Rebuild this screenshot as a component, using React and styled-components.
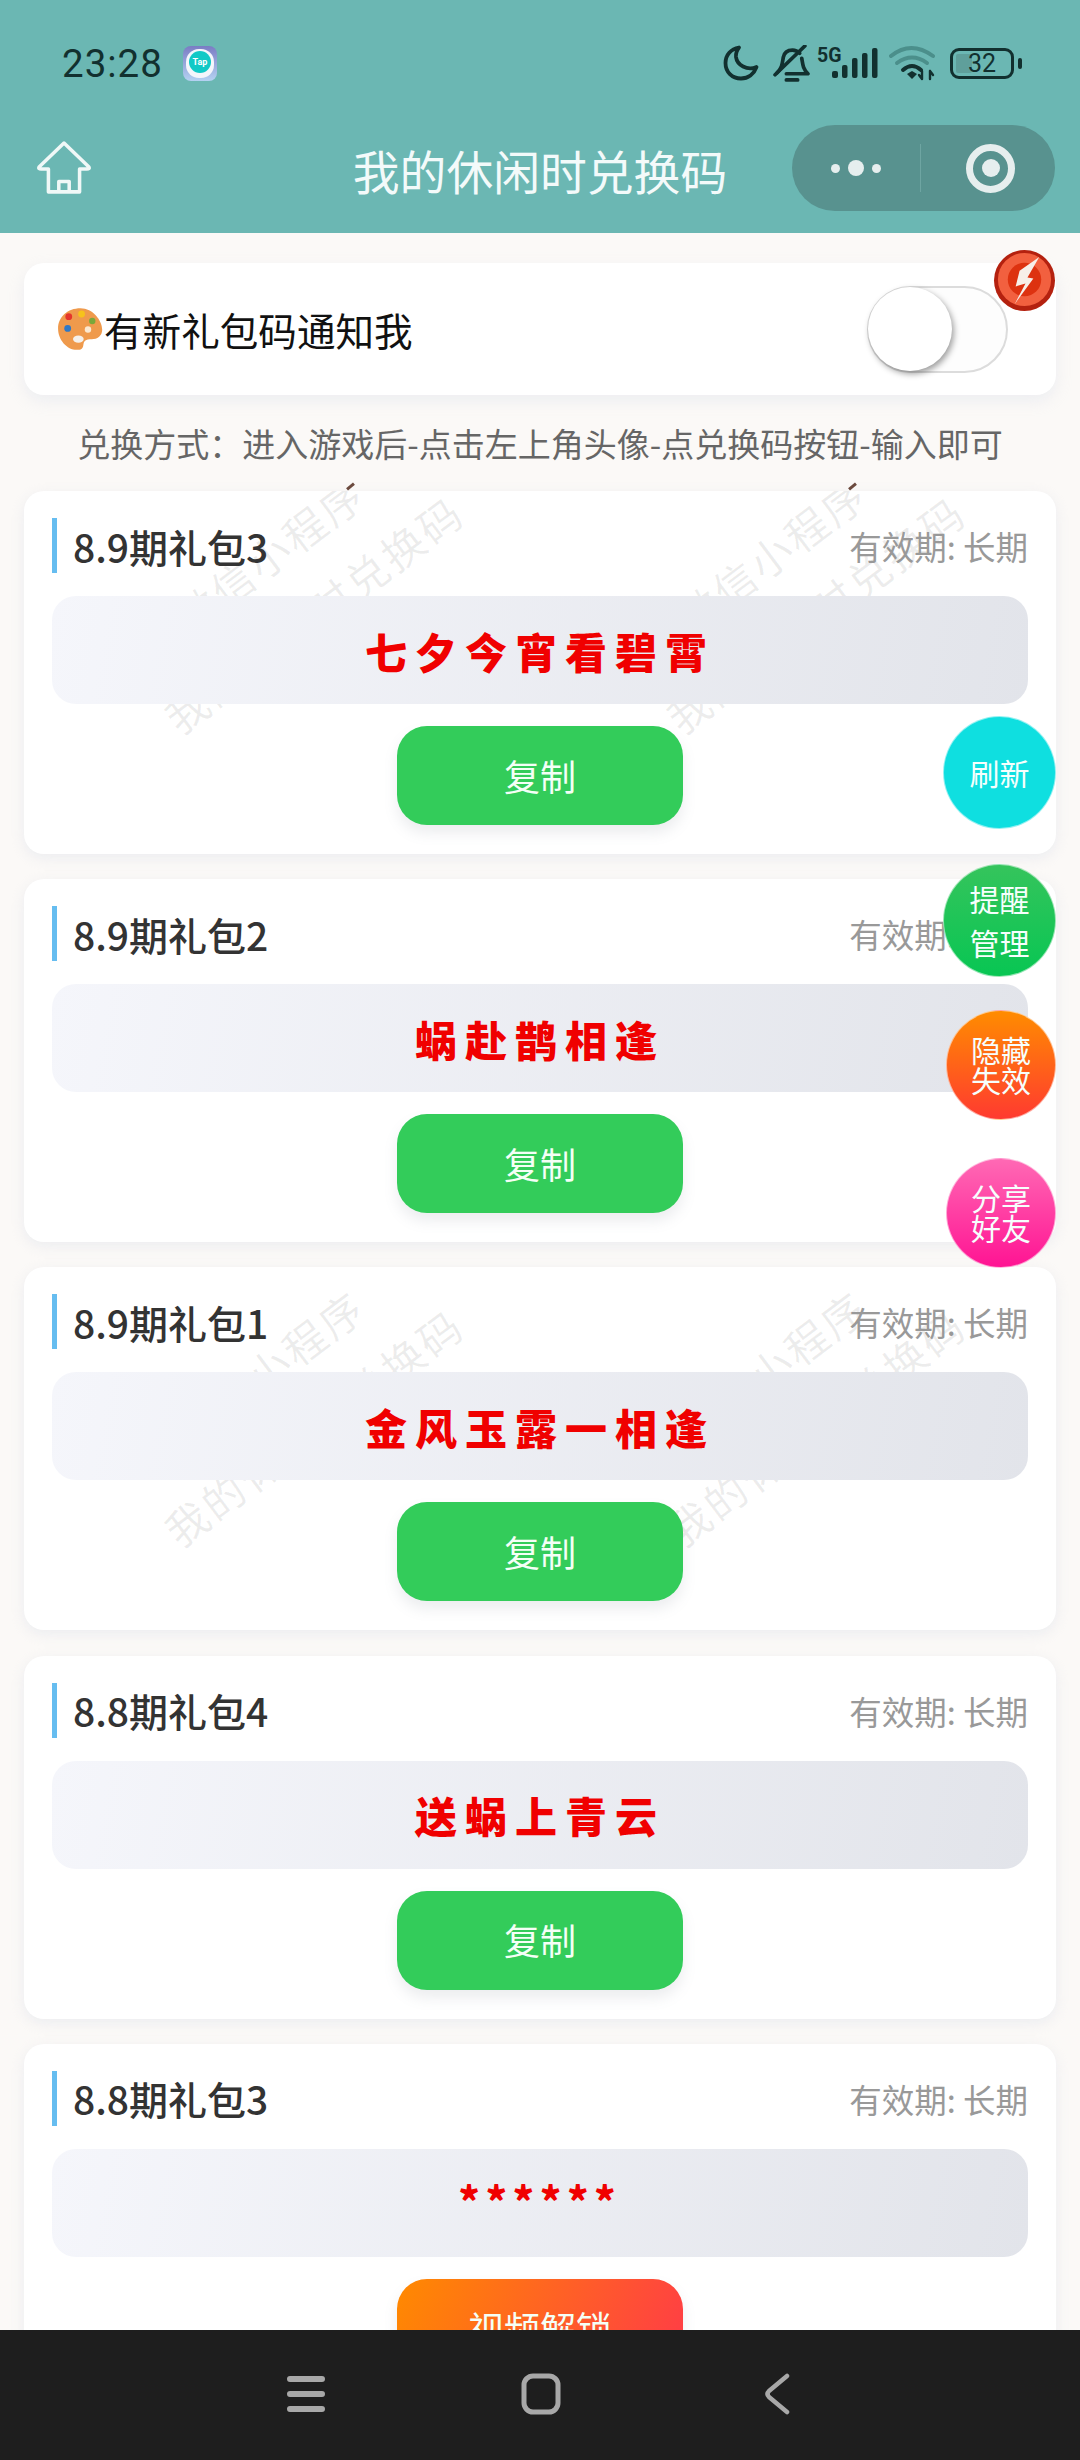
import React from 'react'
import styled, { createGlobalStyle } from 'styled-components'

const GlobalStyle = createGlobalStyle`
    html, body {
        margin: 0;
        padding: 0;
        background: #fbf9f7;
        font-family: "Noto Sans CJK SC", "Noto Sans", sans-serif;
    }
    * {
        box-sizing: border-box;
    }
`

const Phone = styled.div`
    position: relative;
    width: 1080px;
    height: 2460px;
    display: flex;
    flex-direction: column;
    overflow: hidden;
    background: #fbf9f7;
`

const Header = styled.header`
    height: 233px;
    flex-shrink: 0;
    background: #6bb7b3;
`

const StatusBar = styled.div`
    height: 125px;
    padding: 45px 60px 0 62px;
    display: flex;
    align-items: flex-start;
    justify-content: space-between;
`

const StatusLeft = styled.div`
    display: flex;
    align-items: center;
    gap: 20px;
    height: 37px;
`

const Clock = styled.span`
    font-family: Roboto, sans-serif;
    font-size: 38.5px;
    line-height: 37px;
    letter-spacing: 1px;
    color: #12302f;
`

const StatusRight = styled.div`
    display: flex;
    align-items: flex-start;
`

const StatusIcon = styled.span`
    display: flex;
    margin-right: ${props => props.$gap}px;
`

const Battery = styled.div`
    position: relative;
    width: 64px;
    height: 31px;
    margin: 3px 6px 0 0;
    border: 3px solid #12302f;
    border-radius: 9px;
    display: flex;
    align-items: center;
    justify-content: center;
    font-family: Roboto, sans-serif;
    font-size: 25px;
    color: #12302f;
    &::before {
        content: '';
        position: absolute;
        left: 3px;
        top: 3px;
        bottom: 3px;
        width: 16px;
        border-radius: 2px;
        background: #5f9f9b;
    }
    &::after {
        content: '';
        position: absolute;
        right: -11px;
        top: 7px;
        width: 4px;
        height: 11px;
        border-radius: 2px;
        background: #12302f;
    }
`

const BatteryLevel = styled.span`
    position: relative;
`

const NavBar = styled.div`
    position: relative;
    height: 108px;
    padding: 0 25px 22px 37px;
    display: flex;
    align-items: center;
    justify-content: space-between;
`

const NavTitle = styled.h1`
    position: absolute;
    left: 0;
    right: 0;
    top: 12px;
    margin: 0;
    text-align: center;
    font-size: 46.8px;
    line-height: 66px;
    font-weight: 400;
    color: #f3fafa;
`

const Capsule = styled.div`
    width: 263px;
    height: 86px;
    border-radius: 43px;
    background: #58928f;
    display: flex;
    align-items: center;
`

const CapsulePart = styled.div`
    flex: ${props => props.$grow};
    height: 48px;
    padding-left: ${props => props.$shift || 0}px;
    display: flex;
    align-items: center;
    justify-content: center;
    gap: 8px;
    & + & {
        border-left: 1px solid #6ea5a2;
    }
`

const Dot = styled.span`
    width: ${props => props.$size}px;
    height: ${props => props.$size}px;
    border-radius: 50%;
    background: #e6eeee;
`

const Target = styled.span`
    width: 49px;
    height: 49px;
    border-radius: 50%;
    border: 7px solid #e6eeee;
    display: flex;
    align-items: center;
    justify-content: center;
    &::after {
        content: '';
        width: 18px;
        height: 18px;
        border-radius: 50%;
        background: #e6eeee;
    }
`

const Content = styled.main`
    flex: 1;
    min-height: 0;
    padding: 30px 24px 0;
    overflow: hidden;
`

const NoticeCard = styled.div`
    position: relative;
    height: 132px;
    padding: 0 48px 0 33px;
    display: flex;
    align-items: center;
    justify-content: space-between;
    border-radius: 20px;
    background: #fff;
    box-shadow: 0 6px 16px rgba(205, 212, 228, 0.3);
`

const NoticeLabel = styled.div`
    display: flex;
    align-items: center;
    font-size: 38.6px;
    color: #111;
`

const Switch = styled.div`
    position: relative;
    width: 141px;
    height: 87px;
    margin-top: 1px;
    border-radius: 44px;
    border: 2px solid #dcdcdc;
    background: #fdfdfd;
`

const Knob = styled.span`
    position: absolute;
    left: -1px;
    top: -1px;
    width: 84px;
    height: 84px;
    border-radius: 50%;
    background: #fff;
    box-shadow: 2px 3px 6px rgba(0, 0, 0, 0.38);
`

const Badge = styled.svg`
    position: absolute;
    right: 0;
    top: -14px;
    width: 63px;
    height: 63px;
`

const Note = styled.p`
    height: 96px;
    margin: 0;
    display: flex;
    align-items: center;
    justify-content: center;
    font-size: 33px;
    color: #666;
    white-space: nowrap;
`

const CardList = styled.div`
    display: flex;
    flex-direction: column;
    gap: 25.2px;
`

const Card = styled.section`
    position: relative;
    flex-shrink: 0;
    height: 363px;
    padding: 27px 28px 28px;
    border-radius: 20px;
    background: #fff;
    box-shadow: 0 4px 14px rgba(205, 212, 228, 0.32);
`

const WatermarkClip = styled.div`
    position: absolute;
    inset: 0;
    overflow: hidden;
    border-radius: 20px;
`

const Watermark = styled.div`
    position: absolute;
    left: ${props => props.$left}px;
    top: ${props => props.$top}px;
    transform: translate(-50%, -50%) rotate(-37deg);
    font-size: 42px;
    line-height: 74px;
    letter-spacing: 3px;
    text-align: center;
    white-space: nowrap;
    color: rgba(60, 60, 60, 0.09);
`

const Tick = styled.span`
    position: absolute;
    left: ${props => props.$left}px;
    top: -6px;
    width: 9px;
    height: 3px;
    background: #6b4a3e;
    transform: rotate(-40deg);
`

const CardHead = styled.div`
    position: relative;
    height: 55px;
    display: flex;
    align-items: center;
    justify-content: space-between;
    border-left: 5px solid #66bdf0;
    padding-left: 16px;
`

const CardTitle = styled.h2`
    margin: 0;
    font-size: 39px;
    font-weight: 500;
    color: #333;
`

const Expiry = styled.span`
    font-size: 32.5px;
    color: #999;
`

const CodeBox = styled.div`
    position: relative;
    height: 108px;
    margin-top: 23px;
    display: flex;
    align-items: ${props => (props.$hidden ? 'flex-start' : 'center')};
    justify-content: center;
    padding-top: ${props => (props.$hidden ? '22px' : '0')};
    border-radius: 24px;
    background: linear-gradient(100deg, #f5f6fb, #e2e4ea);
    font-size: ${props => (props.$hidden ? '40px' : '42px')};
    font-weight: 900;
    letter-spacing: ${props => (props.$hidden ? '6px' : '8px')};
    color: #f00000;
`

const ActionButton = styled.button`
    position: relative;
    display: block;
    width: 286px;
    height: 99px;
    margin: 22px auto 0;
    padding: 0 0 2px;
    border: 0;
    border-radius: 30px;
    font-family: inherit;
    font-size: 36px;
    color: #f4fff6;
    background: ${props => props.$locked
        ? 'linear-gradient(115deg, #ff8a00, #ff3a48)'
        : '#33cc5a'};
    box-shadow: 0 8px 14px rgba(120, 130, 140, 0.14);
`

const FloatStack = styled.div`
    position: absolute;
    right: 24px;
    top: 716px;
    display: flex;
    flex-direction: column;
    align-items: flex-end;
`

const FloatButton = styled.button`
    width: ${props => props.$size}px;
    height: ${props => props.$size}px;
    margin-bottom: ${props => props.$gap}px;
    padding: 0 0 2px;
    border: 1px solid rgba(255, 255, 255, 0.55);
    border-radius: 50%;
    font-family: inherit;
    font-size: 30px;
    line-height: ${props => props.$leading}px;
    color: #f6fffd;
    background: ${props => props.$bg};
`

const BottomBar = styled.nav`
    position: relative;
    height: 130px;
    flex-shrink: 0;
    padding: 0 4px 3px 0;
    display: flex;
    align-items: center;
    justify-content: center;
    gap: 195px;
    background: #1e1e1e;
`

const BackSlot = styled.span`
    display: flex;
    margin-left: 8px;
`

const MenuIcon = () => (
    <svg width="40" height="40" viewBox="0 0 40 40" fill="none" stroke="#a8a8a8" strokeWidth="6" strokeLinecap="round">
        <path d="M4 5h32M4 20h32M4 35h32" />
    </svg>
)

const HomeSquareIcon = () => (
    <svg width="40" height="42" viewBox="0 0 40 42" fill="none" stroke="#a8a8a8" strokeWidth="5">
        <rect x="3" y="3" width="34" height="36" rx="9" />
    </svg>
)

const BackIcon = () => (
    <svg width="26" height="42" viewBox="0 0 26 42" fill="none" stroke="#a8a8a8" strokeWidth="4.5" strokeLinecap="round" strokeLinejoin="round">
        <path d="M23 3 L5 18 Q2 21 5 24 L23 39" />
    </svg>
)

const TapIcon = () => (
    <svg width="34" height="35" viewBox="0 0 34 35">
        <defs>
            <linearGradient id="tapBg" x1="0" y1="0" x2="0" y2="1">
                <stop offset="0" stopColor="#7a7cc4" />
                <stop offset="1" stopColor="#b5d2f2" />
            </linearGradient>
        </defs>
        <rect width="34" height="35" rx="8" fill="url(#tapBg)" />
        <rect x="3" y="3" width="28" height="29" rx="13" fill="#f4f6fb" />
        <circle cx="17" cy="16" r="11" fill="#12c9c6" />
        <text x="17" y="18.5" textAnchor="middle" fontSize="9" fontWeight="700" fontFamily="Roboto, sans-serif" fill="#fff">Tap</text>
    </svg>
)

const MoonIcon = () => (
    <svg width="36" height="36" viewBox="0 0 36 36" fill="none" stroke="#12302f" strokeWidth="3.8" strokeLinecap="round" strokeLinejoin="round">
        <path d="M16 2.5 C8 4 2.5 10 2.5 18 C2.5 27 9 33.5 18 33.5 C25 33.5 31 29 33.5 22 C24 26 14 20 13 12 C12.6 8 14 5 16 2.5 Z" />
    </svg>
)

const BellMuteIcon = () => (
    <svg width="37" height="38" viewBox="0 0 36 37" fill="none" stroke="#12302f" strokeWidth="3.6" strokeLinecap="round" strokeLinejoin="round">
        <path d="M4 27 C9 22 9 18 10 12 C11 7 15 5 19 5 C22 5 24 6 26 8" />
        <path d="M28 13 C29 19 29 23 34 28 H13" />
        <path d="M13 34 H24" />
        <path d="M2 29 L31 1" />
    </svg>
)

const SignalIcon = () => (
    <svg width="62" height="36" viewBox="0 0 62 36">
        <text x="0" y="17" fontSize="19.5" fontWeight="700" fontFamily="Roboto, sans-serif" fill="#12302f">5G</text>
        <g fill="#12302f">
            <rect x="15" y="26" width="6" height="7" rx="2" />
            <rect x="25" y="20" width="5.5" height="13" rx="2" />
            <rect x="35" y="13" width="5.5" height="20" rx="2" />
            <rect x="45" y="8" width="5.5" height="25" rx="2" />
            <rect x="55" y="3" width="5.5" height="30" rx="2" />
        </g>
    </svg>
)

const WifiIcon = () => (
    <svg width="48" height="36" viewBox="0 0 48 36" fill="none" strokeLinecap="round">
        <path d="M2 11 Q22 -5 44 11" stroke="#4b8f8b" strokeWidth="4" />
        <path d="M8 18 Q23 7 38 18" stroke="#4b8f8b" strokeWidth="4" />
        <path d="M14 25 Q23 17 32 25" stroke="#12302f" strokeWidth="4" />
        <path d="M18 29 L23 26 L28 29 L23 34 Z" fill="#12302f" />
        <path d="M33 26 V34 M30 30 L33 34 M41 34 V26 M41 26 L44 30" stroke="#12302f" strokeWidth="2.4" />
    </svg>
)

const HouseIcon = () => (
    <svg width="54" height="54" viewBox="0 0 52 52" fill="none" stroke="#f0f8f7" strokeWidth="3.4" strokeLinejoin="round">
        <path d="M26 2 L50 25 Q51 27 48 27 H41 V49 H11 V27 H4 Q1 27 2 25 Z" />
        <path d="M21 49 V39 H31 V49" />
    </svg>
)

const PaletteIcon = () => (
    <svg width="47" height="45" viewBox="0 0 44 42">
        <path d="M22 1 C10 1 1 9 1 20 C1 31 10 41 20 40 C27 39.500 23 33 27 31 C32 29 37 32 41 26 C46 18 36 1 22 1 Z" fill="#ef9a4c" />
        <circle cx="11" cy="9" r="3.200" fill="#e5352b" />
        <circle cx="23" cy="6.500" r="3.200" fill="#f6c21c" />
        <circle cx="33" cy="13" r="3" fill="#7aa83a" />
        <circle cx="10" cy="20" r="3.200" fill="#2f78c4" />
        <circle cx="29" cy="21" r="3" fill="#fbe9d2" />
        <ellipse cx="20" cy="30" rx="5" ry="3.500" fill="#f5f0ea" />
    </svg>
)

const BoltBadge = () => (
    <Badge viewBox="0 0 64 64">
        <circle cx="32" cy="32" r="31" fill="#b4210f" />
        <circle cx="32" cy="31" r="27" fill="#f2603f" />
        <circle cx="32" cy="31" r="17" fill="#dd3210" />
        <path d="M47 8 L27 22 L23 38 L33 35 L22 56 L41 30 L35 29 Z" fill="#f7efe9" />
    </Badge>
)

const coupons = [
    { id: 1, title: '8.9期礼包3', code: '七夕今宵看碧霄', markTop: 93, ticks: true },
    { id: 2, title: '8.9期礼包2', code: '蜗赴鹊相逢' },
    { id: 3, title: '8.9期礼包1', code: '金风玉露一相逢', markTop: 130 },
    { id: 4, title: '8.8期礼包4', code: '送蜗上青云' },
    { id: 5, title: '8.8期礼包3', code: '******', locked: true },
]

const floatButtons = [
    { label: ['刷新'], size: 113, gap: 35, leading: 40, bg: '#0fdfe0' },
    { label: ['提醒', '管理'], size: 113, gap: 33, leading: 44, bg: 'linear-gradient(#35c45c, #08c653)' },
    { label: ['隐藏', '失效'], size: 110, gap: 38, leading: 30, bg: 'linear-gradient(#ff8c00, #ff3a30)' },
    { label: ['分享', '好友'], size: 110, gap: 0, leading: 30, bg: 'linear-gradient(#ff69b4, #ff1493)' },
]

const App = () => {
    return (
        <Phone>
            <GlobalStyle />
            <Header>
                <StatusBar>
                    <StatusLeft>
                        <Clock>23:28</Clock>
                        <TapIcon />
                    </StatusLeft>
                    <StatusRight>
                        <StatusIcon $gap={14}><MoonIcon /></StatusIcon>
                        <StatusIcon $gap={7}><BellMuteIcon /></StatusIcon>
                        <StatusIcon $gap={10}><SignalIcon /></StatusIcon>
                        <StatusIcon $gap={13}><WifiIcon /></StatusIcon>
                        <Battery><BatteryLevel>32</BatteryLevel></Battery>
                    </StatusRight>
                </StatusBar>
                <NavBar>
                    <HouseIcon />
                    <NavTitle>我的休闲时兑换码</NavTitle>
                    <Capsule>
                        <CapsulePart $grow={131}>
                            <Dot $size={9} />
                            <Dot $size={16} />
                            <Dot $size={9} />
                        </CapsulePart>
                        <CapsulePart $grow={132} $shift={5}>
                            <Target />
                        </CapsulePart>
                    </Capsule>
                </NavBar>
            </Header>

            <Content>
                <NoticeCard>
                    <NoticeLabel>
                        <PaletteIcon />
                        有新礼包码通知我
                    </NoticeLabel>
                    <Switch><Knob /></Switch>
                    <BoltBadge />
                </NoticeCard>
                <Note>兑换方式：进入游戏后-点击左上角头像-点兑换码按钮-输入即可</Note>
                <CardList>
                    {coupons.map(coupon => (
                        <Card key={coupon.id}>
                            {coupon.markTop && (
                                <WatermarkClip>
                                    {[267, 769].map(left => (
                                        <Watermark key={left} $left={left} $top={coupon.markTop}>
                                            微信小程序<br />我的休闲时兑换码
                                        </Watermark>
                                    ))}
                                </WatermarkClip>
                            )}
                            {coupon.ticks && (
                                <>
                                    <Tick $left={322} />
                                    <Tick $left={824} />
                                </>
                            )}
                            <CardHead>
                                <CardTitle>{coupon.title}</CardTitle>
                                <Expiry>有效期: 长期</Expiry>
                            </CardHead>
                            <CodeBox $hidden={coupon.locked}>{coupon.code}</CodeBox>
                            <ActionButton $locked={coupon.locked}>
                                {coupon.locked ? '视频解锁' : '复制'}
                            </ActionButton>
                        </Card>
                    ))}
                </CardList>
            </Content>

            <FloatStack>
                {floatButtons.map(item => (
                    <FloatButton key={item.label[0]} $size={item.size} $gap={item.gap} $leading={item.leading} $bg={item.bg}>
                        {item.label.map(line => <div key={line}>{line}</div>)}
                    </FloatButton>
                ))}
            </FloatStack>

            <BottomBar>
                <MenuIcon />
                <HomeSquareIcon />
                <BackSlot><BackIcon /></BackSlot>
            </BottomBar>
        </Phone>
    )
}

export default App
